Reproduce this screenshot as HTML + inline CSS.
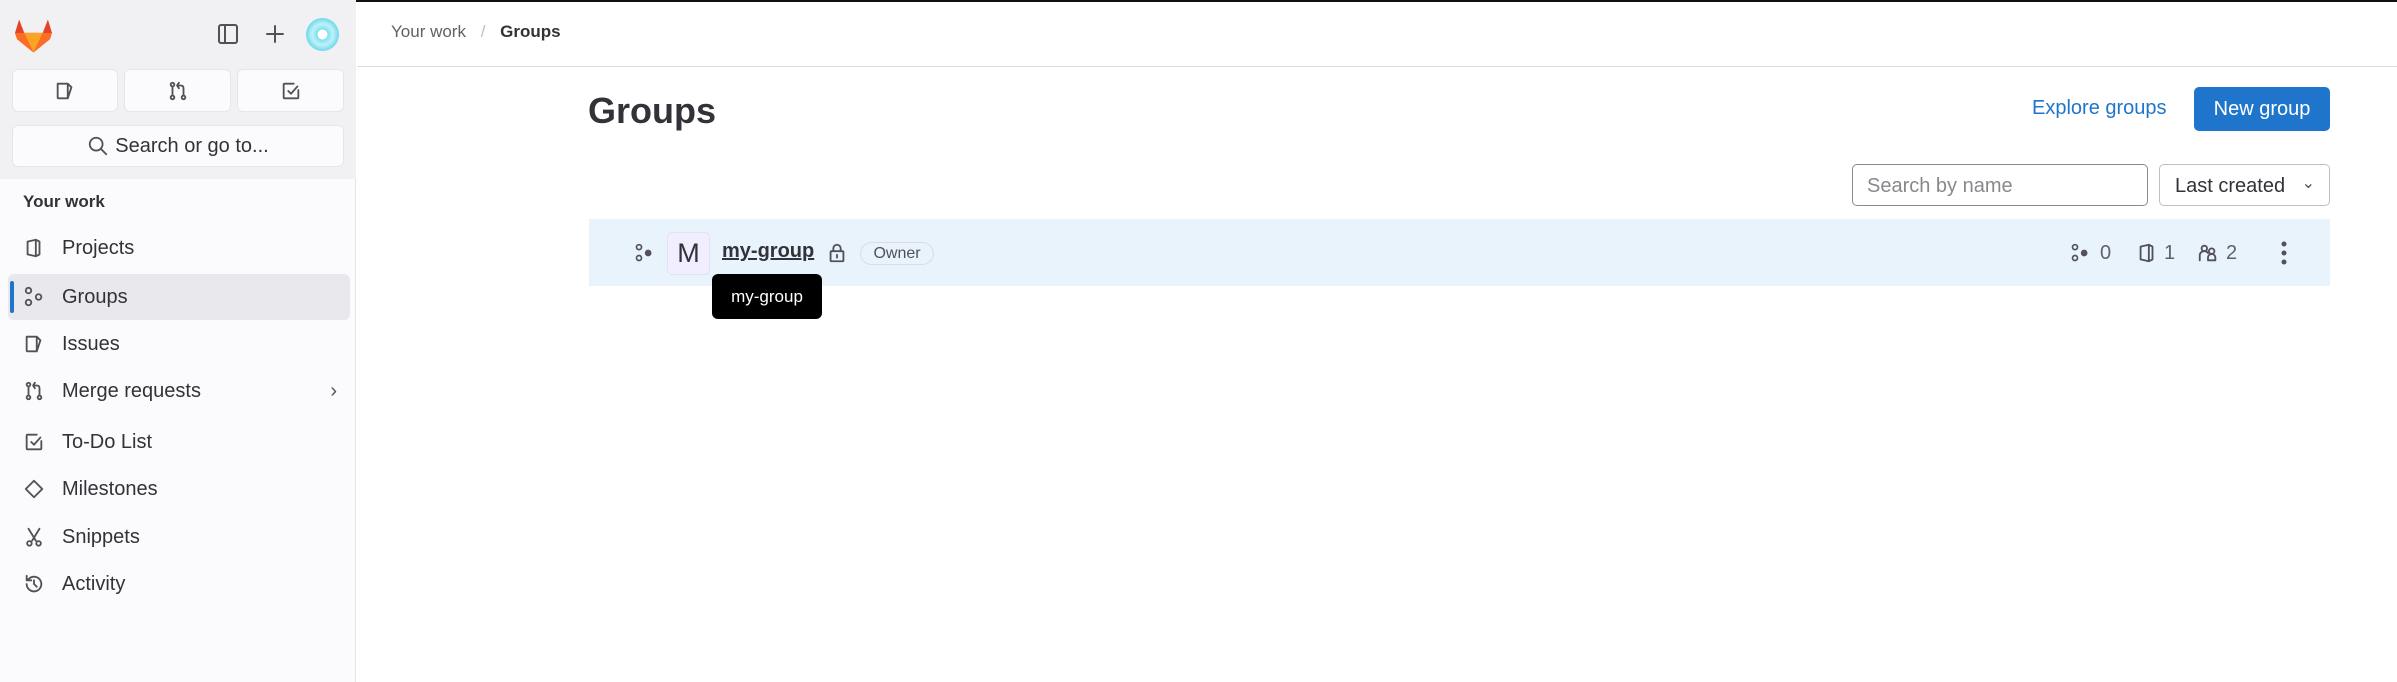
<!DOCTYPE html>
<html><head><meta charset="utf-8"><style>
*{box-sizing:border-box;margin:0;padding:0}
body{width:2397px;height:682px;overflow:hidden;background:#fff;font-family:"Liberation Sans",sans-serif;color:#333238;position:relative}
.a{position:absolute}
.sb{left:0;top:0;width:356px;height:682px;background:#fbfafd;border-right:1px solid #e4e3e8}
.sbtop{left:0;top:0;width:356px;height:179px;background:#f1f1f3}
.btn{background:#fbfafd;border:1px solid #e6e5ea;border-radius:6px;display:flex;align-items:center;justify-content:center}
.nav{left:23px;height:46px;display:flex;align-items:center;font-size:20px;color:#333238;width:320px}
.nav svg{width:22px;height:22px;margin-right:17px;flex:none}
svg{fill:none;stroke:#535158;stroke-width:2;stroke-linecap:round;stroke-linejoin:round}
</style></head><body>
<div class="a" style="left:0;top:0;width:2397px;height:2px;background:#111"></div>
<div class="a sb"></div>
<div class="a sbtop"></div>
<!-- logo -->
<svg class="a" style="left:15px;top:18px;width:37px;height:36px;stroke:none" viewBox="0 0 36 34"><path fill="#e24329" d="M18 33 2 20 0 14 4 1l5 13h18l5-13 4 13-2 6z"/><path fill="#fc6d26" d="M18 33 9 14H0l2 6zM18 33l9-19h9l-2 6z"/><path fill="#fca326" d="M18 33 9 14h18z"/></svg>
<svg class="a" style="left:216px;top:22px;width:24px;height:24px" viewBox="0 0 24 24"><rect x="3" y="3" width="18" height="18" rx="2"/><path d="M9 3v18"/></svg>
<svg class="a" style="left:263px;top:22px;width:24px;height:24px" viewBox="0 0 24 24"><path d="M12 4v16M4 12h16"/></svg>
<div class="a" style="left:306px;top:18px;width:33px;height:33px;border-radius:50%;background:radial-gradient(circle,#fff 20%,#7ee0f0 22%,#bff1f8 45%,#6fd9ec 70%)"></div>
<div class="a btn" style="left:12px;top:69px;width:106px;height:43px"><svg width="22" height="22" viewBox="0 0 24 24"><path d="M4 4h11l4 4-4 12H5a1 1 0 0 1-1-1zM15 4v16"/></svg></div>
<div class="a btn" style="left:124px;top:69px;width:107px;height:43px"><svg width="22" height="22" viewBox="0 0 24 24"><circle cx="6" cy="5" r="2"/><circle cx="6" cy="19" r="2"/><circle cx="18" cy="19" r="2"/><path d="M6 7v10M18 17V9c0-2-1-3-3-3h-3M13 3l-2 3 2 3"/></svg></div>
<div class="a btn" style="left:237px;top:69px;width:107px;height:43px"><svg width="22" height="22" viewBox="0 0 24 24"><path d="M20 11v8a1 1 0 0 1-1 1H5a1 1 0 0 1-1-1V5a1 1 0 0 1 1-1h10"/><path d="m9 12 3 3 7-8"/></svg></div>
<div class="a btn" style="left:12px;top:125px;width:332px;height:42px;font-size:20px;color:#333238"><svg width="22" height="22" viewBox="0 0 24 24" style="margin-right:6px"><circle cx="10" cy="10" r="7"/><path d="m15 15 6 6"/></svg>Search or go to...</div>
<div class="a" style="left:23px;top:192px;font-size:17px;font-weight:bold">Your work</div>
<div class="a" style="left:8px;top:274px;width:342px;height:46px;background:#e9e8ed;border-radius:6px"></div>
<div class="a" style="left:10px;top:281px;width:4px;height:32px;background:#1f75cb;border-radius:2px"></div>
<div class="a nav" style="top:225px"><svg viewBox="0 0 24 24"><path d="M5 5l9-2v18l-9-2zM14 3l4 2v14l-4 2"/></svg>Projects</div>
<div class="a nav" style="top:274px"><svg viewBox="0 0 24 24"><circle cx="6" cy="5" r="3"/><circle cx="6" cy="18" r="3"/><circle cx="17" cy="12" r="3"/></svg>Groups</div>
<div class="a nav" style="top:321px"><svg viewBox="0 0 24 24"><path d="M4 4h11l4 4-4 12H5a1 1 0 0 1-1-1zM15 4v16"/></svg>Issues</div>
<div class="a nav" style="top:368px"><svg viewBox="0 0 24 24"><circle cx="6" cy="5" r="2"/><circle cx="6" cy="19" r="2"/><circle cx="18" cy="19" r="2"/><path d="M6 7v10M18 17V9c0-2-1-3-3-3h-3M13 3l-2 3 2 3"/></svg>Merge requests<span style="margin-left:auto;margin-right:6px;font-size:20px;color:#535158">›</span></div>
<div class="a nav" style="top:419px"><svg viewBox="0 0 24 24"><path d="M20 11v8a1 1 0 0 1-1 1H5a1 1 0 0 1-1-1V5a1 1 0 0 1 1-1h10"/><path d="m9 12 3 3 7-8"/></svg>To-Do List</div>
<div class="a nav" style="top:466px"><svg viewBox="0 0 24 24"><path d="M12 3l9 9-9 9-9-9z"/></svg>Milestones</div>
<div class="a nav" style="top:514px"><svg viewBox="0 0 24 24"><path d="M6 3l8 13M18 3l-8 13"/><circle cx="7" cy="19" r="2.5"/><circle cx="17" cy="19" r="2.5"/></svg>Snippets</div>
<div class="a nav" style="top:561px"><svg viewBox="0 0 24 24"><path d="M4 12a8 8 0 1 0 3-6.2L4 8M4 3v5h5M12 8v4l3 3"/></svg>Activity</div>

<!-- header -->
<div class="a" style="left:357px;top:66px;width:2040px;height:1px;background:#dcdcde"></div>
<div class="a" style="left:391px;top:22px;font-size:17px;color:#626168">Your work <span style="color:#bfbfc3;margin:0 10px">/</span> <b style="color:#333238">Groups</b></div>
<div class="a" style="left:588px;top:90px;font-size:36px;font-weight:bold">Groups</div>
<div class="a" style="left:2032px;top:97px;font-size:20px;color:#1f75cb">Explore groups</div>
<div class="a" style="left:2194px;top:87px;width:136px;height:44px;background:#1f75cb;border-radius:5px;color:#fff;font-size:20px;display:flex;align-items:center;justify-content:center">New group</div>
<div class="a" style="left:1852px;top:164px;width:296px;height:42px;border:1px solid #89888d;border-radius:5px;font-size:20px;color:#89888d;padding:10px 14px">Search by name</div>
<div class="a" style="left:2159px;top:164px;width:171px;height:42px;border:1px solid #bfbfc3;border-radius:5px;font-size:20px;color:#333238;padding:10px 15px">Last created <span style="position:absolute;right:14px;top:8px;font-size:16px;color:#535158">⌄</span></div>
<!-- row -->
<div class="a" style="left:589px;top:219px;width:1741px;height:67px;background:#e9f3fc"></div>
<svg class="a" style="left:634px;top:243px;width:20px;height:20px" viewBox="0 0 24 24"><circle cx="6" cy="5" r="3"/><circle cx="6" cy="18" r="3"/><circle cx="17" cy="12" r="3" fill="#535158"/></svg>
<div class="a" style="left:667px;top:232px;width:43px;height:43px;background:#f1efff;border:1px solid #e4e0f5;border-radius:5px;font-size:27px;color:#333238;display:flex;align-items:center;justify-content:center">M</div>
<div class="a" style="left:722px;top:240px;font-size:20px;font-weight:bold;text-decoration:underline;text-decoration-thickness:2px">my-group</div>
<svg class="a" style="left:826px;top:242px;width:22px;height:22px" viewBox="0 0 24 24"><rect x="5" y="10" width="14" height="11" rx="1"/><path d="M8 10V7a4 4 0 0 1 8 0v3M12 14v3"/></svg>
<div class="a" style="left:860px;top:242px;width:74px;height:23px;border:1px solid #dcdcde;border-radius:12px;font-size:16px;color:#535158;text-align:center;line-height:21px">Owner</div>
<div class="a" style="left:712px;top:274px;width:110px;height:45px;background:#000;border-radius:6px;color:#fff;font-size:17px;text-align:center;line-height:45px">my-group</div>
<svg class="a" style="left:2070px;top:243px;width:20px;height:20px" viewBox="0 0 24 24"><circle cx="6" cy="5" r="3"/><circle cx="6" cy="18" r="3"/><circle cx="17" cy="12" r="3" fill="#535158"/></svg>
<div class="a" style="left:2100px;top:242px;font-size:20px;color:#626168">0</div>
<svg class="a" style="left:2136px;top:242px;width:22px;height:22px" viewBox="0 0 24 24"><path d="M5 5l9-2v18l-9-2zM14 3l4 2v14l-4 2"/></svg>
<div class="a" style="left:2164px;top:242px;font-size:20px;color:#626168">1</div>
<svg class="a" style="left:2197px;top:242px;width:22px;height:22px" viewBox="0 0 24 24"><circle cx="8" cy="7" r="3"/><circle cx="16" cy="10" r="3"/><path d="M3 20v-5a5 5 0 0 1 9 -3M12 20v-3a4 4 0 0 1 8 0v3z"/></svg>
<div class="a" style="left:2226px;top:242px;font-size:20px;color:#626168">2</div>
<svg class="a" style="left:2274px;top:241px;width:20px;height:24px;stroke:none;fill:#535158" viewBox="0 0 20 24"><circle cx="10" cy="3" r="2.5"/><circle cx="10" cy="12" r="2.5"/><circle cx="10" cy="21" r="2.5"/></svg>
</body></html>
